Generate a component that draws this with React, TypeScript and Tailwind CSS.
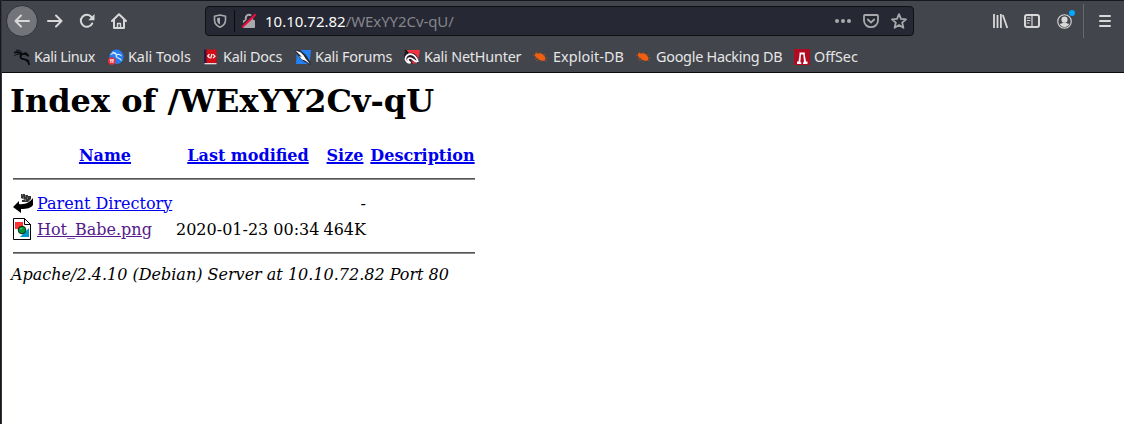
import React from "react";

const stroke = {
  fill: "none",
  stroke: "currentColor",
  strokeWidth: 2,
  strokeLinecap: "round" as const,
  strokeLinejoin: "round" as const,
};

function BackIcon() {
  return <svg className="size-4" viewBox="0 0 16 16" {...stroke}><path d="M15 8H1.5M7 2.5 1.5 8 7 13.5" /></svg>;
}
function ForwardIcon() {
  return <svg className="size-4" viewBox="0 0 16 16" {...stroke}><path d="M1 8h13.5M9 2.5 14.5 8 9 13.5" /></svg>;
}
function ReloadIcon() {
  return (
    <svg className="size-4" viewBox="0 0 16 16" {...stroke}>
      <path d="M13.2 10.5A6 6 0 1 1 12.5 4" />
      <path d="M15.5 1V7.2H9.3Z" fill="currentColor" stroke="none" />
    </svg>
  );
}
function HomeIcon() {
  return (
    <svg className="size-4" viewBox="0 0 16 16" {...stroke}>
      <path d="M1 8 8 1.2 15 8" />
      <path d="M3 7v8h10V7" />
      <path d="M6.5 15v-4.5h3V15" strokeWidth={1.4} />
    </svg>
  );
}
function ShieldIcon() {
  return (
    <svg className="h-[14px] w-[14px]" viewBox="0 0 14 14" {...stroke} strokeWidth={1.6}>
      <path d="M7 1 12.5 2.2V6c0 3.5-2 5.7-5.5 7.2C3.5 11.7 1.5 9.5 1.5 6V2.2Z" />
      <path d="M7 3.5v7.1C5 9.6 4 8 4 5.8V4.2Z" fill="currentColor" stroke="none" />
    </svg>
  );
}
function InsecureIcon() {
  return (
    <svg className="size-4" viewBox="0 0 16 16" fill="none">
      <rect x="2" y="7" width="12" height="8" rx="1" fill="#a9a9ad" />
      <path d="M4.8 7V5a3.2 3.2 0 0 1 6.4 0v2" stroke="#a9a9ad" strokeWidth="2" />
      <path d="M.8 12.6 13.2.8" stroke="#262833" strokeWidth="1.8" />
      <path d="M1.2 14.2 14.7 1.3" stroke="#f50a3c" strokeWidth="2" />
    </svg>
  );
}
function PocketIcon() {
  return (
    <svg className="size-4" viewBox="0 0 16 16" {...stroke} strokeWidth={1.8}>
      <path d="M2 2h12a1 1 0 0 1 1 1v4.5a7 6.7 0 0 1-14 0V3a1 1 0 0 1 1-1Z" />
      <path d="m4.8 6.5 3.2 3 3.2-3" />
    </svg>
  );
}
function StarIcon() {
  return (
    <svg className="size-4" viewBox="0 0 16 16" {...stroke} strokeWidth={1.8}>
      <path d="m8 1.2 2 4.6 5 .5-3.8 3.4 1.2 5.1L8 12.1l-4.4 2.7 1.2-5.1L1 6.3l5-.5Z" />
    </svg>
  );
}
function LibraryIcon() {
  return (
    <svg className="size-4" viewBox="0 0 16 16" {...stroke} strokeLinecap="butt">
      <path d="M2 1v14M5.5 2v13M8.9 1v14M10.8 2l4.5 13" strokeWidth={1.8} />
    </svg>
  );
}
function SidebarIcon() {
  return (
    <svg className="size-4" viewBox="0 0 16 16" {...stroke}>
      <rect x="1" y="2" width="14" height="12" rx="2" />
      <path d="M8 2v12M3.2 5h2.8M3.2 7.5h2.8M3.2 10h1.8" strokeWidth={1.2} />
    </svg>
  );
}
function AccountIcon() {
  return (
    <svg className="size-[15px]" viewBox="0 0 16 16" fill="currentColor">
      <circle cx="8" cy="8" r="7.2" fill="none" stroke="currentColor" strokeWidth="1.2" />
      <circle cx="8" cy="6" r="3.3" />
      <path d="M2.8 10.5c2 0 2.5-.5 3.2-.8h4c.7.3 1.2.8 3.2.8-1 2.2-3 3.5-5.2 3.5s-4.2-1.3-5.2-3.5Z" />
    </svg>
  );
}

function KaliIcon() {
  return (
    <svg className="size-4" viewBox="0 0 16 16" fill="none" stroke="#08090b" strokeLinecap="round">
      <path d="M.5 3.6C3 2.7 5.5 3 7.5 5" strokeWidth="1.6" />
      <path d="M2.5 1.2c2-.2 4 .5 5.5 2.3M.8 6.3c2-1.5 4-1.5 6-.9" strokeWidth="1" />
      <path d="M14.2 6.7C12 4.5 8.500 4.300 7 6.200c-1.300 1.900 0 3.600 2.500 4 3 .5 5 1.900 5.500 5" strokeWidth="1.8" />
      <path d="M10 4.300c1.500-.8 3-.5 4 2.300M10.500 10.500c1.300 0 2.700.2 4.200 1.300" strokeWidth="1.1" />
    </svg>
  );
}
function ToolsIcon() {
  return (
    <svg className="size-4" viewBox="0 0 16 16">
      <circle cx="8.5" cy="7.8" r="7.2" fill="#267bef" />
      <path d="M2.5 5.500c3-1.500 5-1 6 .5M4 3.300c2-.3 3.500.4 4.500 2M13.500 7c-2-2.300-5-2-5.500 0-.3 2 3.800 1.200 5.500 4.500" fill="none" stroke="#d9eafd" strokeWidth="1.1" />
      <circle cx="3.8" cy="12" r="3.8" fill="#ee2b35" />
      <path d="M1.7 10.8h4.300M2.9 11v3M4.9 11v3" stroke="#fff" strokeWidth="1" />
    </svg>
  );
}
function DocsIcon() {
  return (
    <svg className="size-4" viewBox="0 0 16 16">
      <path d="M1 .5h12.500V15H1Z" fill="#d30d16" /><path d="M1 .5h2.500v13.500H1Z" fill="#31153b" />
      <path d="M1.500 14h12v1.300h-12Z" fill="#e3dede" />
      <path d="m6.500 5.200-1.800 1.800 2 2M10 5.200l2 2-2 2M9 5l-1.400 4.500" fill="none" stroke="#fff" strokeWidth="1.2" />
    </svg>
  );
}
function ForumsIcon() {
  return (
    <svg className="size-4" viewBox="0 0 16 16">
      <path d="M2 1h14l-1.500 14H1Z" fill="#2481f4" />
      <path d="m0 1 5 0 6 5 5 8-1 2-7-4-4-4-4-6Z" fill="#272a32" />
      <path d="m.5 1.500 5 1.800 3 3 2 3.200 4.500 5.500-5-3.500-3-1-3-3.500 3 1-3-3Z" fill="#fff" />
    </svg>
  );
}
function NetHunterIcon() {
  return (
    <svg className="size-4" viewBox="0 0 16 16">
      <path d="M3 1h13l-2.500 13-6.500 1Z" fill="#f0333e" />
      <path d="M1 3C-1 7 0 12 5 14.500l4 .5-2-4 7 3.500C15 8 11 3 6 4Z" fill="#251b25" />
      <path d="M7 13.500C2 15 0 9 3 6.500c4-3 9-.5 11 6.500M6 13c-3-1-2.500-4 0-4 2.500.2 3.500 2.500 7 4" fill="none" stroke="#fff" strokeWidth="1.7" />
      <path d="m1 1 3 3" stroke="#111" strokeWidth="1.5" />
    </svg>
  );
}
function BugIcon() {
  return (
    <svg className="size-4" viewBox="0 0 16 16">
      <g transform="translate(-.6 0)">
        <path d="M2.500 5.500c0-1.500 1.500-2.200 3-.8 2.500-1 5 0 6.500 2.300 1.200 1.800 1.200 3.500.3 4.500-2.800.8-5.500-.1-7.300-2.500-1.800-.6-2.700-2-2.500-3.500Z" fill="#f15f10" />
        <path d="m5 5-1-2.500M8 5V3M3 7 .6 6M5 9l-3 1M6.500 10.500l-3 1.500M9 11.500l-1.500 1.200M11 6.500l2.500-1.500M12.500 9H15M12.500 11l1.500 1.500" stroke="#a85028" strokeWidth=".8" />
      </g>
    </svg>
  );
}
function OffSecIcon() {
  return (
    <svg className="size-4" viewBox="0 0 16 16">
      <path fill="#b00b20" d="M0 0h16v16H0Z" />
      <path d="M5.500 3.500h5.300v2.200L12 12.500h1.500V15H9v-1.800h1L9.300 5.500H7l-.7 7.700h1V15H3v-2.500h1.500L5.500 5.700Z" fill="#fff" />
    </svg>
  );
}

const bookmarks: { label: string; width: string; tracking: string; Icon: () => React.JSX.Element }[] = [
  { label: "Kali Linux", width: "w-[94px]", tracking: "tracking-[-0.38px]", Icon: KaliIcon },
  { label: "Kali Tools", width: "w-[95px]", tracking: "tracking-[-0.04px]", Icon: ToolsIcon },
  { label: "Kali Docs", width: "w-[92px]", tracking: "tracking-[-0.22px]", Icon: DocsIcon },
  { label: "Kali Forums", width: "w-[109px]", tracking: "tracking-[-0.22px]", Icon: ForumsIcon },
  { label: "Kali NetHunter", width: "w-[129px]", tracking: "tracking-[-0.2px]", Icon: NetHunterIcon },
  { label: "Exploit-DB", width: "w-[103px]", tracking: "tracking-[0.06px]", Icon: BugIcon },
  { label: "Google Hacking DB", width: "w-[158px]", tracking: "tracking-[-0.26px]", Icon: BugIcon },
  { label: "OffSec", width: "w-[90px]", tracking: "tracking-[-0.05px]", Icon: OffSecIcon },
];

function Browser() {
  return (
    <header className="h-[73px] border-t border-b border-t-[#17181d] border-b-[#0b0b0e] bg-[#42454c] font-['Noto_Sans','Open_Sans',sans-serif] text-[#e6e6e6]">
      <div className="flex h-[39px] items-center pt-px pl-[4px] text-[#d8d8d8]">
        <button className="flex size-8 shrink-0 items-center justify-center rounded-full border border-[#303238] bg-[#737479]"><BackIcon /></button>
        <div className="ml-[9px] flex items-center gap-4"><ForwardIcon /><ReloadIcon /><HomeIcon /></div>
        <div className="ml-[78px] flex h-[30px] w-[709px] shrink-0 items-center rounded-[4px] border border-[#0f1014] bg-[#262833] pr-[6px] pl-[7px] text-[#a9a9ad]">
          <ShieldIcon />
          <div className="ml-[7px] h-[22px] w-px bg-[#0c0c0f]" />
          <div className="ml-[6px]"><InsecureIcon /></div>
          <div className="ml-[8px] flex-1 text-[15px] leading-5 whitespace-nowrap text-[#85858b]"><span className="text-[#fafafa]">10.10.72.82</span><span className="tracking-[-0.08px]">/WExYY2Cv-qU/</span></div>
          <div className="flex items-center gap-3">
            <svg className="size-4" viewBox="0 0 16 16" fill="currentColor"><circle cx="2" cy="8" r="2" /><circle cx="8" cy="8" r="2" /><circle cx="14" cy="8" r="2" /></svg>
            <PocketIcon /><StarIcon />
          </div>
        </div>
        <div className="ml-[78px] flex items-center gap-4">
          <LibraryIcon /><SidebarIcon />
          <div className="relative flex size-4 items-center justify-center"><AccountIcon /><span className="absolute -top-[3px] left-[13px] size-[6px] rounded-full bg-[#00a8ff]" /></div>
        </div>
        <div className="ml-[11px] h-[34px] w-px bg-[#66686d]" />
        <svg className="ml-[13px] size-4" viewBox="0 0 16 16" {...stroke}><path d="M3 3h10M3 8h10M3 13h10" /></svg>
      </div>
      <nav className="flex h-8 items-center pt-[2px] pl-3">
        {bookmarks.map(({ label, width, tracking, Icon }) => (
          <a key={label} className={"flex shrink-0 items-center gap-1 text-[14.4px] whitespace-nowrap " + width}><Icon /><span className={tracking}>{label}</span></a>
        ))}
      </nav>
    </header>
  );
}

function ParentIcon() {
  return (
    <svg className="h-[22px] w-5" viewBox="0 0 20 22">
      <path d="M8 2h4v1h3v1h3v3l-3 3H9V8h3L8 6Z" fill="#333" />
      <path d="M20 6v7c-2 3-6 4-12 4v4l-8-6 6-6v3c6 1 11-2 14-6Z" fill="#000" />
      <path d="M9 3h1M12 4h1M10 6h1M14 6h1M12 8h1" stroke="#aaa" />
    </svg>
  );
}
function ImageIcon() {
  return (
    <svg className="h-[22px] w-5" viewBox="0 0 20 22">
      <path d="M.5.5h11l6 6v15H.5Z" fill="#fff" stroke="#000" />
      <path d="M11.500.5v6h6v15H1" fill="none" stroke="#000" />
      <path d="M2 4h8v7H2Z" fill="#ff3333" />
      <path d="M16 10v9H7Z" fill="#0099cc" />
      <circle cx="9" cy="12" r="3.8" fill="#009933" stroke="#000" strokeWidth=".8" /><path d="M7 10h2v1H7Z" fill="#66cc66" />
    </svg>
  );
}

function Rule() {
  return <div className="ml-[3px] h-[2px] w-[462px] border-t border-[#555] bg-[#8b8b8b]" />;
}

const columns = "ml-[3px] grid grid-cols-[20px_135px_143px_43px_106px] gap-x-1";
const heading = "pl-px underline decoration-2";

export default function App() {
  return (
    <div className="flex h-[424px] w-[1124px] overflow-hidden bg-white">
      <div className="w-[2px] shrink-0 border-r border-[#34363b] bg-[#17181e]" />
      <div className="min-w-0 flex-1">
        <Browser />
        <main className="pl-2 font-['DejaVu_Serif',serif] text-[16px] leading-[19px] text-black">
          <h1 className="pt-[9px] text-[32px] leading-[38px] font-bold">Index of /WExYY2Cv-qU</h1>
          <div className={columns + " mt-[26px] text-center font-bold whitespace-nowrap text-[#0000ee]"}>
            <span /><a className={heading}>Name</a><a className={heading}>Last modified</a><a className={heading}>Size</a><a className="-ml-px underline decoration-2">Description</a>
          </div>
          <div className="mt-[13px]"><Rule /></div>
          <div className={columns + " mt-[11px] h-6 items-center whitespace-nowrap"}>
            <ParentIcon /><a className="text-[#0000ee] underline">Parent Directory</a><span /><span className="text-right">-</span>
          </div>
          <div className={columns + " mt-[2px] h-6 items-center whitespace-nowrap"}>
            <ImageIcon /><a className="text-[#551a8b] underline">Hot_Babe.png</a><span className="text-right">2020-01-23 00:34</span><span className="text-right">464K</span>
          </div>
          <div className="mt-[11px]"><Rule /></div>
          <address className="mt-[11px] ml-px whitespace-nowrap italic">Apache/2.4.10 (Debian) Server at 10.10.72.82 Port 80</address>
        </main>
      </div>
    </div>
  );
}
